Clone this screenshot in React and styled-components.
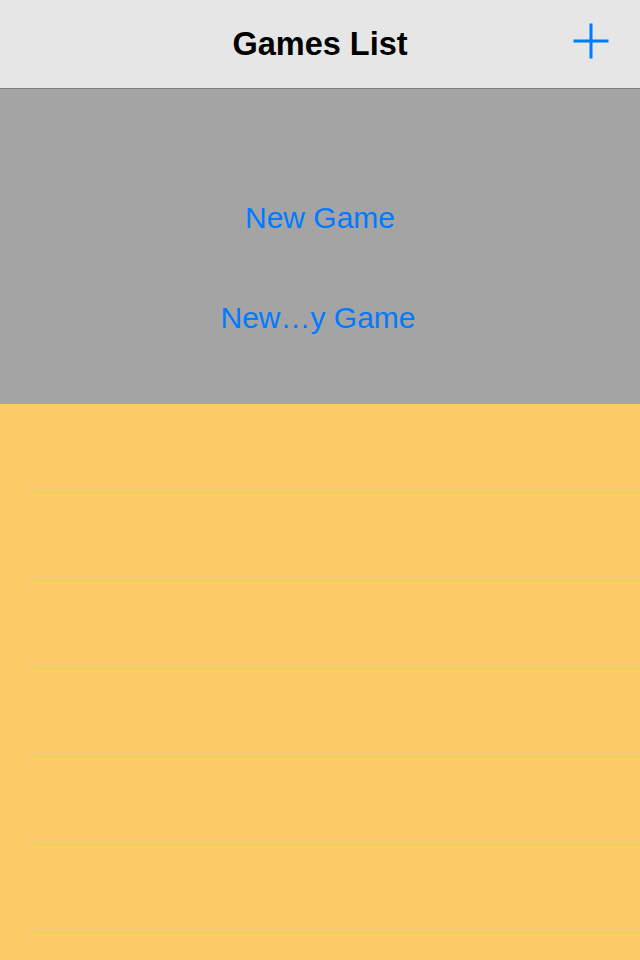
import React from "react";
import styled, { createGlobalStyle } from "styled-components";

const Global = createGlobalStyle`
  html, body { margin: 0; padding: 0; background: #fecb69; }
  body { font-family: "Liberation Sans", Arial, Helvetica, sans-serif; }
`;

const Screen = styled.div`
  width: 640px;
  height: 960px;
  display: flex;
  flex-direction: column;
  overflow: hidden;
  background: #fecb69;
`;

const NavBar = styled.header`
  height: 88px;
  flex: none;
  background: #e6e6e6;
  border-bottom: 1px solid #7c7c7c;
  display: grid;
  grid-template-columns: 1fr auto 1fr;
  align-items: center;
`;

const Title = styled.h1`
  grid-column: 2;
  margin: 0;
  font-size: 32.5px;
  font-weight: 700;
  color: #000;
  letter-spacing: 0;
`;

const AddButton = styled.button`
  grid-column: 3;
  justify-self: end;
  margin-right: 31px;
  margin-top: -6px;
  padding: 0;
  border: 0;
  background: none;
  width: 36px;
  height: 36px;
  display: flex;
  align-items: center;
  justify-content: center;
`;

const Panel = styled.section`
  height: 315px;
  flex: none;
  background: #a4a4a4;
  display: flex;
  flex-direction: column;
  align-items: center;
  padding-top: 99px;
  gap: 40px;
  box-sizing: border-box;
`;

const LinkButton = styled.button`
  height: 60px;
  border: 0;
  background: none;
  padding: 0;
  font-family: inherit;
  font-size: 30px;
  color: #007aff;
  line-height: 60px;
  margin-left: ${(p) => p.$shift || 0}px;
`;

const List = styled.ul`
  list-style: none;
  margin: 0;
  padding: 0;
  flex: 1;
`;

const Row = styled.li`
  height: 87px;
  margin-left: 30px;
  border-bottom: 1px solid #d8c9a6;
`;

export default function App() {
  return (
    <Screen>
      <Global />
      <NavBar>
        <Title>Games List</Title>
        <AddButton aria-label="Add">
          <svg width="36" height="36" viewBox="0 0 36 36">
            <rect x="16.5" y="0.5" width="3" height="35" fill="#007aff" />
            <rect x="0.5" y="16.5" width="35" height="3" fill="#007aff" />
          </svg>
        </AddButton>
      </NavBar>
      <Panel>
        <LinkButton>New Game</LinkButton>
        <LinkButton $shift={-4}>New…y Game</LinkButton>
      </Panel>
      <List>
        {Array.from({ length: 7 }).map((_, i) => (
          <Row key={i} />
        ))}
      </List>
    </Screen>
  );
}
